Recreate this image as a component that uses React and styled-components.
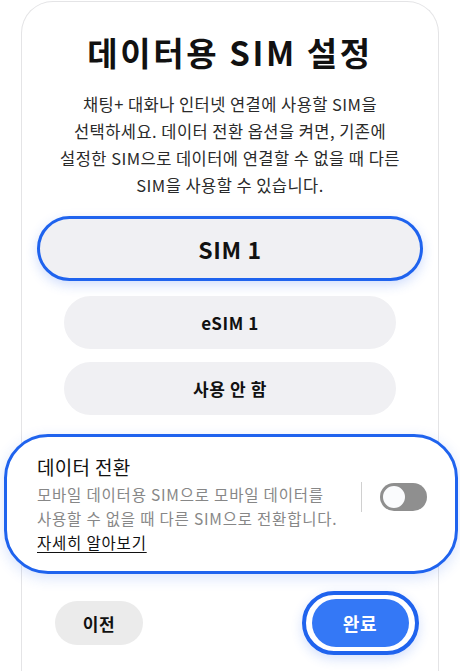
import React, { useState } from "react";
import styled, { createGlobalStyle, css } from "styled-components";

const Global = createGlobalStyle`
  html, body { margin: 0; padding: 0; background: #ffffff; }
  body {
    font-family: "Noto Sans CJK KR", "Noto Sans", sans-serif;
    color: #111;
    overflow: hidden;
  }
`;

const Page = styled.div`
  width: 460px;
  height: 671px;
  overflow: hidden;
  box-sizing: border-box;
  padding-top: 1px;
`;

const Card = styled.div`
  margin: 0 21px;
  min-height: 720px;
  border: 1.5px solid #e4e4e6;
  border-bottom: none;
  border-radius: 32px 32px 0 0;
  background: #fff;
  box-sizing: border-box;
  padding: 29px 15px 0;
  display: flex;
  flex-direction: column;
  align-items: stretch;
`;

const Title = styled.h1`
  margin: 0;
  text-align: center;
  font-size: 33px;
  font-weight: 700;
  line-height: 42px;
  letter-spacing: 2.6px;
  color: #111;
  white-space: nowrap;
`;

const Desc = styled.p`
  margin: 18px -20px 0;
  text-align: center;
  font-size: 16.5px;
  line-height: 27px;
  color: #2a2a2a;
  letter-spacing: 0.45px;
  white-space: nowrap;
`;

const Options = styled.div`
  margin-top: 17px;
  display: flex;
  flex-direction: column;
  align-items: center;
  gap: 13px;
`;

const Option = styled.button`
  font-family: inherit;
  border: none;
  background: #f0f0f3;
  color: #111;
  border-radius: 999px;
  cursor: pointer;
  box-sizing: border-box;
  width: 332px;
  height: 53px;
  font-size: 17px;
  font-weight: 600;
  letter-spacing: 0.6px;
  ${(p) =>
    p.$selected &&
    css`
      width: 386px;
      height: 65px;
      font-size: 23px;
      border: 3.5px solid #1f63ee;
      box-shadow: 0 4px 12px rgba(40, 100, 240, 0.22);
      margin-bottom: 2px;
    `}
`;

const SwitchPanel = styled.div`
  margin: 19px -34.5px 0 -33.5px;
  border: 3.5px solid #1f63ee;
  border-radius: 44px;
  background: #fff;
  box-shadow: 0 4px 14px rgba(40, 100, 240, 0.18);
  padding: 16px 28px 17px 30.5px;
  display: flex;
  align-items: center;
`;

const PanelText = styled.div`
  flex: 1;
  display: flex;
  flex-direction: column;
  white-space: nowrap;
`;

const PanelTitle = styled.div`
  font-size: 19px;
  line-height: 28px;
  color: #111;
  letter-spacing: 0.3px;
`;

const PanelDesc = styled.div`
  margin-top: 1px;
  font-size: 15.5px;
  line-height: 24px;
  color: #878787;
  letter-spacing: 0.8px;
`;

const LearnMore = styled.a`
  align-self: flex-start;
  font-size: 15.5px;
  line-height: 24px;
  color: #111;
  text-decoration: underline;
  text-underline-offset: 3px;
  letter-spacing: 0.8px;
`;

const Divider = styled.div`
  width: 1px;
  height: 30px;
  background: #d0d0d0;
  margin: 0 18px 14px 20px;
  flex-shrink: 0;
`;

const Toggle = styled.div`
  width: 47px;
  height: 28px;
  border-radius: 14px;
  background: #8f8f8f;
  position: relative;
  margin-bottom: 14px;
  flex-shrink: 0;
`;

const Knob = styled.div`
  position: absolute;
  top: 1px;
  left: 1px;
  width: 26px;
  height: 26px;
  box-sizing: border-box;
  border-radius: 50%;
  background: #fafbfd;
  border: 2px solid #8f8f8f;
`;

const Footer = styled.div`
  margin-top: 17px;
  display: flex;
  justify-content: space-between;
  align-items: center;
  padding: 0 4.5px 0 18px;
`;

const BackButton = styled.button`
  font-family: inherit;
  border: none;
  width: 88px;
  height: 44px;
  border-radius: 22px;
  background: #ebebeb;
  color: #111;
  font-size: 17px;
  font-weight: 700;
  letter-spacing: 0.6px;
`;

const DoneRing = styled.div`
  padding: 4px 6px;
  border: 4px solid #1f63ee;
  border-radius: 999px;
  background: #fff;
  box-shadow: 0 4px 12px rgba(40, 100, 240, 0.2);
  display: flex;
`;

const DoneButton = styled.button`
  font-family: inherit;
  border: none;
  width: 97px;
  height: 48px;
  border-radius: 24px;
  background: #3478f6;
  color: #fff;
  font-size: 18px;
  font-weight: 700;
  letter-spacing: 0.6px;
`;

export default function App() {
  const [selected] = useState("SIM 1");
  const options = ["SIM 1", "eSIM 1", "사용 안 함"];
  return (
    <Page>
      <Global />
      <Card>
        <Title>데이터용 SIM 설정</Title>
        <Desc>
          채팅+ 대화나 인터넷 연결에 사용할 SIM을
          <br />
          선택하세요. 데이터 전환 옵션을 켜면, 기존에
          <br />
          설정한 SIM으로 데이터에 연결할 수 없을 때 다른
          <br />
          SIM을 사용할 수 있습니다.
        </Desc>
        <Options>
          {options.map((o) => (
            <Option key={o} $selected={o === selected}>
              {o}
            </Option>
          ))}
        </Options>
        <SwitchPanel>
          <PanelText>
            <PanelTitle>데이터 전환</PanelTitle>
            <PanelDesc>
              모바일 데이터용 SIM으로 모바일 데이터를
              <br />
              사용할 수 없을 때 다른 SIM으로 전환합니다.
            </PanelDesc>
            <LearnMore>자세히 알아보기</LearnMore>
          </PanelText>
          <Divider />
          <Toggle>
            <Knob />
          </Toggle>
        </SwitchPanel>
        <Footer>
          <BackButton>이전</BackButton>
          <DoneRing>
            <DoneButton>완료</DoneButton>
          </DoneRing>
        </Footer>
      </Card>
    </Page>
  );
}
